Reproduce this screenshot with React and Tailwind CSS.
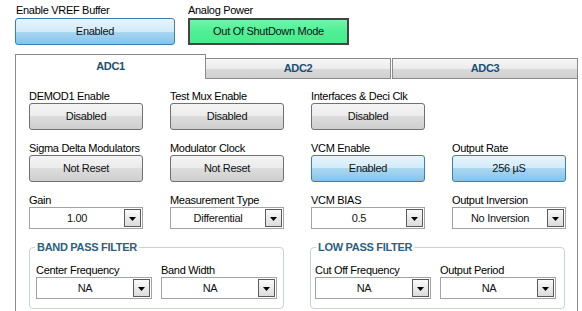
import React from "react";

const grayBtn =
  "h-[27px] w-full rounded-[3px] border border-[#707070] bg-[linear-gradient(#f4f4f4,#ebebeb_50%,#dcdcdc_50%,#cfcfcf)] flex items-center justify-center text-[#111]";
const blueBtn =
  "h-[27px] w-full rounded-[3px] border border-[#3c7fb1] bg-[linear-gradient(#e6f4fc,#d2ebf9_50%,#aad8f2_50%,#86c3e8)] flex items-center justify-center text-[#111]";

function Label({ children }) {
  return <div className="h-[13px] leading-[13px] whitespace-nowrap">{children}</div>;
}

function Btn({ label, text, blue }) {
  return (
    <div className="flex flex-col">
      <Label>{label}</Label>
      <div className={blue ? blueBtn : grayBtn}>{text}</div>
    </div>
  );
}

function Dropdown({ value, w }) {
  return (
    <div
      className="h-[22px] border border-[#a3a3a3] bg-white flex items-center"
      style={w ? { width: w } : undefined}
    >
      <span className="flex-1 text-center text-[#111] whitespace-nowrap">{value}</span>
      <div className="w-[17px] h-[18px] mr-[1px] border border-[#5a5a5a] bg-[linear-gradient(#fafafa,#dcdcdc)] flex items-center justify-center">
        <svg width="7" height="4" viewBox="0 0 7 4" className="mt-[2px]">
          <path d="M0 0H7L3.5 4Z" fill="#000" />
        </svg>
      </div>
    </div>
  );
}

function Select({ label, value }) {
  return (
    <div className="flex flex-col">
      <Label>{label}</Label>
      <Dropdown value={value} />
    </div>
  );
}

function Filter({ title, a, b, left }) {
  return (
    <fieldset
      className={
        "col-span-2 border border-[#c9d1d9] rounded-[4px] pr-[6px] pb-[9px] " +
        (left ? "pl-[6px]" : "pl-[4px] -ml-[1px] mr-[1px]")
      }
    >
      <legend
        className={
          "px-[2px] font-bold text-[#2d5f82] leading-[13px] " + (left ? "-ml-[1px]" : "ml-[1px]")
        }
      >
        {title}
      </legend>
      <div className="flex gap-[9px] mt-[10px]">
        <div className="flex flex-col">
          <Label>{a}</Label>
          <Dropdown value="NA" w={116} />
        </div>
        <div className="flex flex-col">
          <Label>{b}</Label>
          <Dropdown value="NA" w={116} />
        </div>
      </div>
    </fieldset>
  );
}

export default function App() {
  return (
    <div className="w-[582px] h-[311px] overflow-hidden bg-white font-['Liberation_Sans',Arial,sans-serif] text-[11px] tracking-[-0.3px] text-black">
      <div className="flex pl-[15px] pt-[4px] gap-[13px]">
        <div className="flex flex-col w-[160px]">
          <div className="h-[13px] leading-[13px] pl-[1px] mb-[1px]">Enable VREF Buffer</div>
          <div className={blueBtn}>Enabled</div>
        </div>
        <div className="flex flex-col w-[161px]">
          <div className="h-[13px] leading-[13px] mb-[1px]">Analog Power</div>
          <div className="h-[27px] w-full border-2 border-[#444] bg-[linear-gradient(#72f5ab,#50ef96_50%,#47ec8e)] flex items-center justify-center text-[#111]">
            Out Of ShutDown Mode
          </div>
        </div>
      </div>

      <div className="ml-[15px] mt-[9px] w-[563px] flex items-end h-[25px]">
        <div className="w-[191px] h-[25px] border border-b-0 border-[#8a8a8a] bg-white flex items-center justify-center font-bold text-[#1d4f73] pb-[1px]">
          ADC1
        </div>
        <div className="w-[185px] h-[21px] border border-l-0 border-[#8a8a8a] bg-[linear-gradient(#f6f6f6,#ececec_50%,#dadada_50%,#d0d0d0)] flex items-center justify-center font-bold text-[#1d4f73]">
          ADC2
        </div>
        <div className="ml-[1px] w-[186px] h-[21px] border border-[#8a8a8a] bg-[linear-gradient(#f6f6f6,#ececec_50%,#dadada_50%,#d0d0d0)] flex items-center justify-center font-bold text-[#1d4f73]">
          ADC3
        </div>
      </div>

      <div className="ml-[15px] w-[563px] h-[240px] border-l border-r border-[#8a8a8a] pt-[11px] pl-[13px]">
        <div className="grid grid-cols-[114px_114px_114px_114px] gap-x-[27px] gap-y-[12px]">
          <Btn label="DEMOD1 Enable" text="Disabled" />
          <Btn label="Test Mux Enable" text="Disabled" />
          <Btn label="Interfaces & Deci Clk" text="Disabled" />
          <div />
          <Btn label="Sigma Delta Modulators" text="Not Reset" />
          <Btn label="Modulator Clock" text="Not Reset" />
          <Btn label="VCM Enable" text="Enabled" blue />
          <Btn label="Output Rate" text="256 µS" blue />
          <Select label="Gain" value="1.00" />
          <Select label="Measurement Type" value="Differential" />
          <Select label="VCM BIAS" value="0.5" />
          <Select label="Output Inversion" value="No Inversion" />
          <Filter title="BAND PASS FILTER" a="Center Frequency" b="Band Width" left />
          <Filter title="LOW PASS FILTER" a="Cut Off Frequency" b="Output Period" />
        </div>
      </div>
    </div>
  );
}
